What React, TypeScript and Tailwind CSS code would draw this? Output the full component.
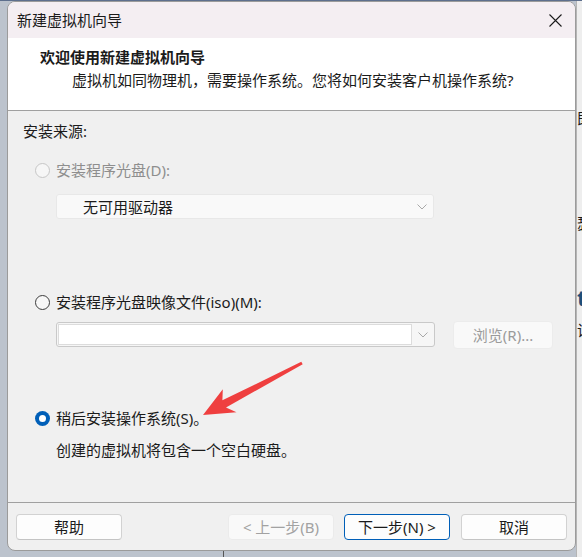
import React from 'react';

const FONT = { fontFamily: '"Noto Sans", "Noto Sans CJK SC", sans-serif' };

function Radio({ state }: { state: 'off' | 'disabled' | 'on' }) {
    if (state === 'on') {
        return (
            <span className="w-[15px] h-[15px] rounded-full bg-[#005fb8] flex items-center justify-center shrink-0">
                <span className="w-[7px] h-[7px] rounded-full bg-white" />
            </span>
        );
    }
    return (
        <span
            className={
                state === 'disabled'
                    ? 'w-[15px] h-[15px] rounded-full border border-[#c6c6c6] bg-[#f6f6f6] shrink-0'
                    : 'w-[15px] h-[15px] rounded-full border border-[#3c3c3c] bg-[#f7f7f7] shrink-0'
            }
        />
    );
}

function Chevron() {
    return (
        <svg width="10" height="6" viewBox="0 0 10 6" fill="none" stroke="#a8a8a8" strokeWidth="1">
            <path d="M0.5 0.5 L5 5 L9.5 0.5" />
        </svg>
    );
}

function Btn({ children, kind = 'normal' }: { children: React.ReactNode; kind?: 'normal' | 'disabled' | 'primary' }) {
    const cls =
        kind === 'disabled'
            ? 'bg-[#f9f9f9] border-[#ebebeb] text-[#a2a2a2]'
            : kind === 'primary'
            ? 'bg-[#fdfdfd] border-[#005fb8] text-[#1b1b1b]'
            : 'bg-[#fdfdfd] border-[#d2d2d2] border-b-[#c4c4c4] text-[#1b1b1b]';
    return (
        <div className={`h-[26px] w-[106px] rounded-[4px] border flex items-center justify-center text-[15px] leading-[20px] ${cls}`}>
            {children}
        </div>
    );
}

export default function App() {
    return (
        <div className="relative w-[582px] h-[557px] overflow-hidden bg-[#bcc3cd]" style={FONT}>
            <div className="h-[1px] bg-[#5d6f8d]" />
            <div className="flex">
                <div className="w-[7px]" />

                {/* Dialog */}
                <div className="w-[569px] h-[550px] rounded-[8px] border border-[#9b9b9b] overflow-hidden flex flex-col bg-[#f0f0f0] text-[#1b1b1b]">
                    {/* Title bar */}
                    <div className="h-[36px] bg-[#f4eef2] flex items-center justify-between pl-[9px] pr-[13px]">
                        <span className="text-[15px] leading-[20px] mt-[-1px]">新建虚拟机向导</span>
                        <svg width="13" height="13" viewBox="0 0 13 13" stroke="#1b1b1b" strokeWidth="1.1" className="mt-[1px]">
                            <path d="M0.5 0.5 L12.5 12.5 M12.5 0.5 L0.5 12.5" />
                        </svg>
                    </div>

                    {/* Header */}
                    <div className="h-[73px] bg-white border-b border-[#a0a0a0] pt-[9px]">
                        <div className="pl-[32px] text-[15px] leading-[20px] font-bold">欢迎使用新建虚拟机向导</div>
                        <div className="pl-[64px] mt-[3px] text-[15px] leading-[20px]">
                            虚拟机如同物理机，需要操作系统。您将如何安装客户机操作系统?
                        </div>
                    </div>

                    {/* Body */}
                    <div className="h-[391px] pl-[15px] pt-[10px] text-[15px] leading-[20px]">
                        <div>安装来源:</div>

                        <div className="mt-[19px] ml-[12px] flex items-center gap-[6px] text-[#8e8e8e]">
                            <Radio state="disabled" />
                            <span>安装程序光盘(D):</span>
                        </div>
                        <div className="mt-[14px] ml-[33px] w-[378px] h-[25px] rounded-[3px] border border-[#e8e8e8] bg-[#f9f9f9] flex items-center justify-between pl-[26px] pr-[6px]">
                            <span>无可用驱动器</span>
                            <Chevron />
                        </div>

                        <div className="mt-[73px] ml-[12px] flex items-center gap-[6px]">
                            <Radio state="off" />
                            <span>安装程序光盘映像文件(iso)(M):</span>
                        </div>
                        <div className="mt-[9px] ml-[33px] flex items-start">
                            <div className="mt-[1px] w-[379px] h-[25px] rounded-[3px] border border-[#c9c9c9] bg-[#f6f6f6] flex items-center">
                                <div className="ml-[1px] w-[354px] h-[21px] bg-white border border-[#dcdcdc]" />
                                <div className="flex-1 flex justify-center">
                                    <Chevron />
                                </div>
                            </div>
                            <div className="ml-[18px] w-[100px] h-[28px] rounded-[4px] border border-[#ececec] bg-[#f9f9f9] text-[#9b9b9b] flex items-center justify-center">
                                浏览(R)...
                            </div>
                        </div>

                        <div className="mt-[59px] ml-[12px] flex items-center gap-[6px]">
                            <Radio state="on" />
                            <span>稍后安装操作系统(S)。</span>
                        </div>
                        <div className="mt-[12px] ml-[33px]">创建的虚拟机将包含一个空白硬盘。</div>
                    </div>

                    {/* Footer */}
                    <div className="flex-1 border-t border-[#a0a0a0] pt-[11px] pl-[8px] pr-[8px] flex items-start">
                        <Btn>帮助</Btn>
                        <div className="flex-1" />
                        <Btn kind="disabled">&lt; 上一步(B)</Btn>
                        <div className="w-[10px]" />
                        <Btn kind="primary">下一步(N) &gt;</Btn>
                        <div className="w-[11px]" />
                        <Btn>取消</Btn>
                    </div>
                </div>

                {/* Window behind, right edge */}
                <div className="flex-1 h-[556px] bg-[#eeeeee] overflow-hidden border-l border-[#b5b5b5] text-[15px] leading-[20px] text-[#1b1b1b] whitespace-nowrap">
                    <div className="mt-[107px]">即</div>
                    <div className="mt-[85px]">瑟</div>
                    <div className="mt-[52px] text-[22px] leading-[24px] font-bold text-[#1f4e79]">t</div>
                    <div className="mt-[11px]">设</div>
                </div>
            </div>
            <div className="absolute left-[223px] top-[551px] w-[1px] h-[6px] bg-[#555555]" />

            {/* Red annotation arrow */}
            <svg className="absolute left-0 top-0 pointer-events-none" width="582" height="557">
                <polygon
                    fill="#ef3f3f"
                    points="301.3,361.8 222.4,400.3 222.8,389.2 203,415 236.5,412.3 226.0,407.5 302.7,364.2"
                />
            </svg>
        </div>
    );
}
